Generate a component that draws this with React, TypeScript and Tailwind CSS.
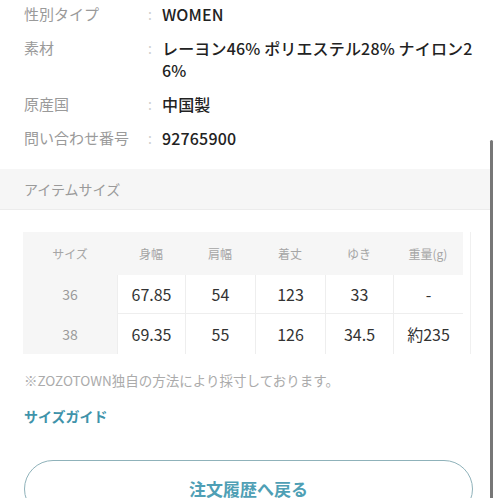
import React from "react";

const font = { fontFamily: '"Noto Sans CJK JP", "Noto Sans", sans-serif' };

const specs = [
  { label: "性別タイプ", value: "WOMEN" },
  { label: "素材", value: "レーヨン46% ポリエステル28% ナイロン26%" },
  { label: "原産国", value: "中国製" },
  { label: "問い合わせ番号", value: "92765900" },
];

const heads = ["サイズ", "身幅", "肩幅", "着丈", "ゆき", "重量(g)"];
const rows = [
  ["36", "67.85", "54", "123", "33", "-"],
  ["38", "69.35", "55", "126", "34.5", "約235"],
];
const colW = ["w-[94px]", "w-[68px]", "w-[70px]", "w-[70px]", "w-[68px]", "w-[70px]"];

export default function App() {
  return (
    <div className="relative w-[498px] h-[498px] overflow-hidden bg-white" style={font}>
      <div className="w-[490px] -mt-[3px]">
        <div className="pl-[24px] pr-[14px]">
          {specs.map((s) => (
            <div key={s.label} className="flex py-[6px] leading-[22px]">
              <div className="w-[124px] shrink-0 text-[15px] text-[#9a9a9a]">{s.label}</div>
              <div className="w-[14px] shrink-0 text-[14px] text-[#cfcfcf]">:</div>
              <div className="flex-1 text-[16px] font-medium tracking-[0.01em] text-[#222] break-all">{s.value}</div>
            </div>
          ))}
        </div>

        <div className="mt-[14px] h-[41px] bg-[#f6f6f6] border-b border-[#ececec] px-[24px] flex items-center text-[14px] text-[#9a9a9a]">
          アイテムサイズ
        </div>

        <div className="mt-[22px] ml-[23px] w-[448px] border-r border-[#f0f0f0]">
          <div className="flex h-[43px] bg-[#f6f6f6] w-[440px]">
            {heads.map((h, i) => (
              <div key={h} className={`${colW[i]} flex items-center justify-center text-[12px] text-[#a5a5a5]`}>
                {h}
              </div>
            ))}
          </div>
          {rows.map((r, ri) => (
            <div key={ri} className={`flex w-[440px] ${ri === 0 ? "h-[39px]" : "h-[40px]"}`}>
              {r.map((c, i) => (
                <div
                  key={i}
                  className={`${colW[i]} flex items-center justify-center ${
                    i === 0
                      ? "bg-[#f6f6f6] text-[14px] text-[#9a9a9a]"
                      : "bg-white text-[16px] text-[#333] border-l border-[#eeeeee]"
                  } ${ri === 0 && i > 0 ? "border-b border-[#eeeeee]" : ""}`}
                >
                  {c}
                </div>
              ))}
            </div>
          ))}
        </div>

        <div className="px-[24px] mt-[17px] text-[13.5px] leading-[18px] text-[#ababab]">
          ※ZOZOTOWN独自の方法により採寸しております。
        </div>
        <div className="px-[24px] mt-[17px] text-[14px] leading-[20px] font-bold text-[#3f93aa]">
          サイズガイド
        </div>
        <div className="pl-[24px] pr-[17px] mt-[34px]">
          <div className="h-[58px] rounded-full border border-[#8fb2ba] flex items-center justify-center text-[17px] font-bold text-[#4f9fb5]">
            注文履歴へ戻る
          </div>
        </div>
      </div>
      <div className="absolute left-[490px] top-[140px] w-[3px] h-[400px] bg-[#777] rounded-sm" />
    </div>
  );
}
